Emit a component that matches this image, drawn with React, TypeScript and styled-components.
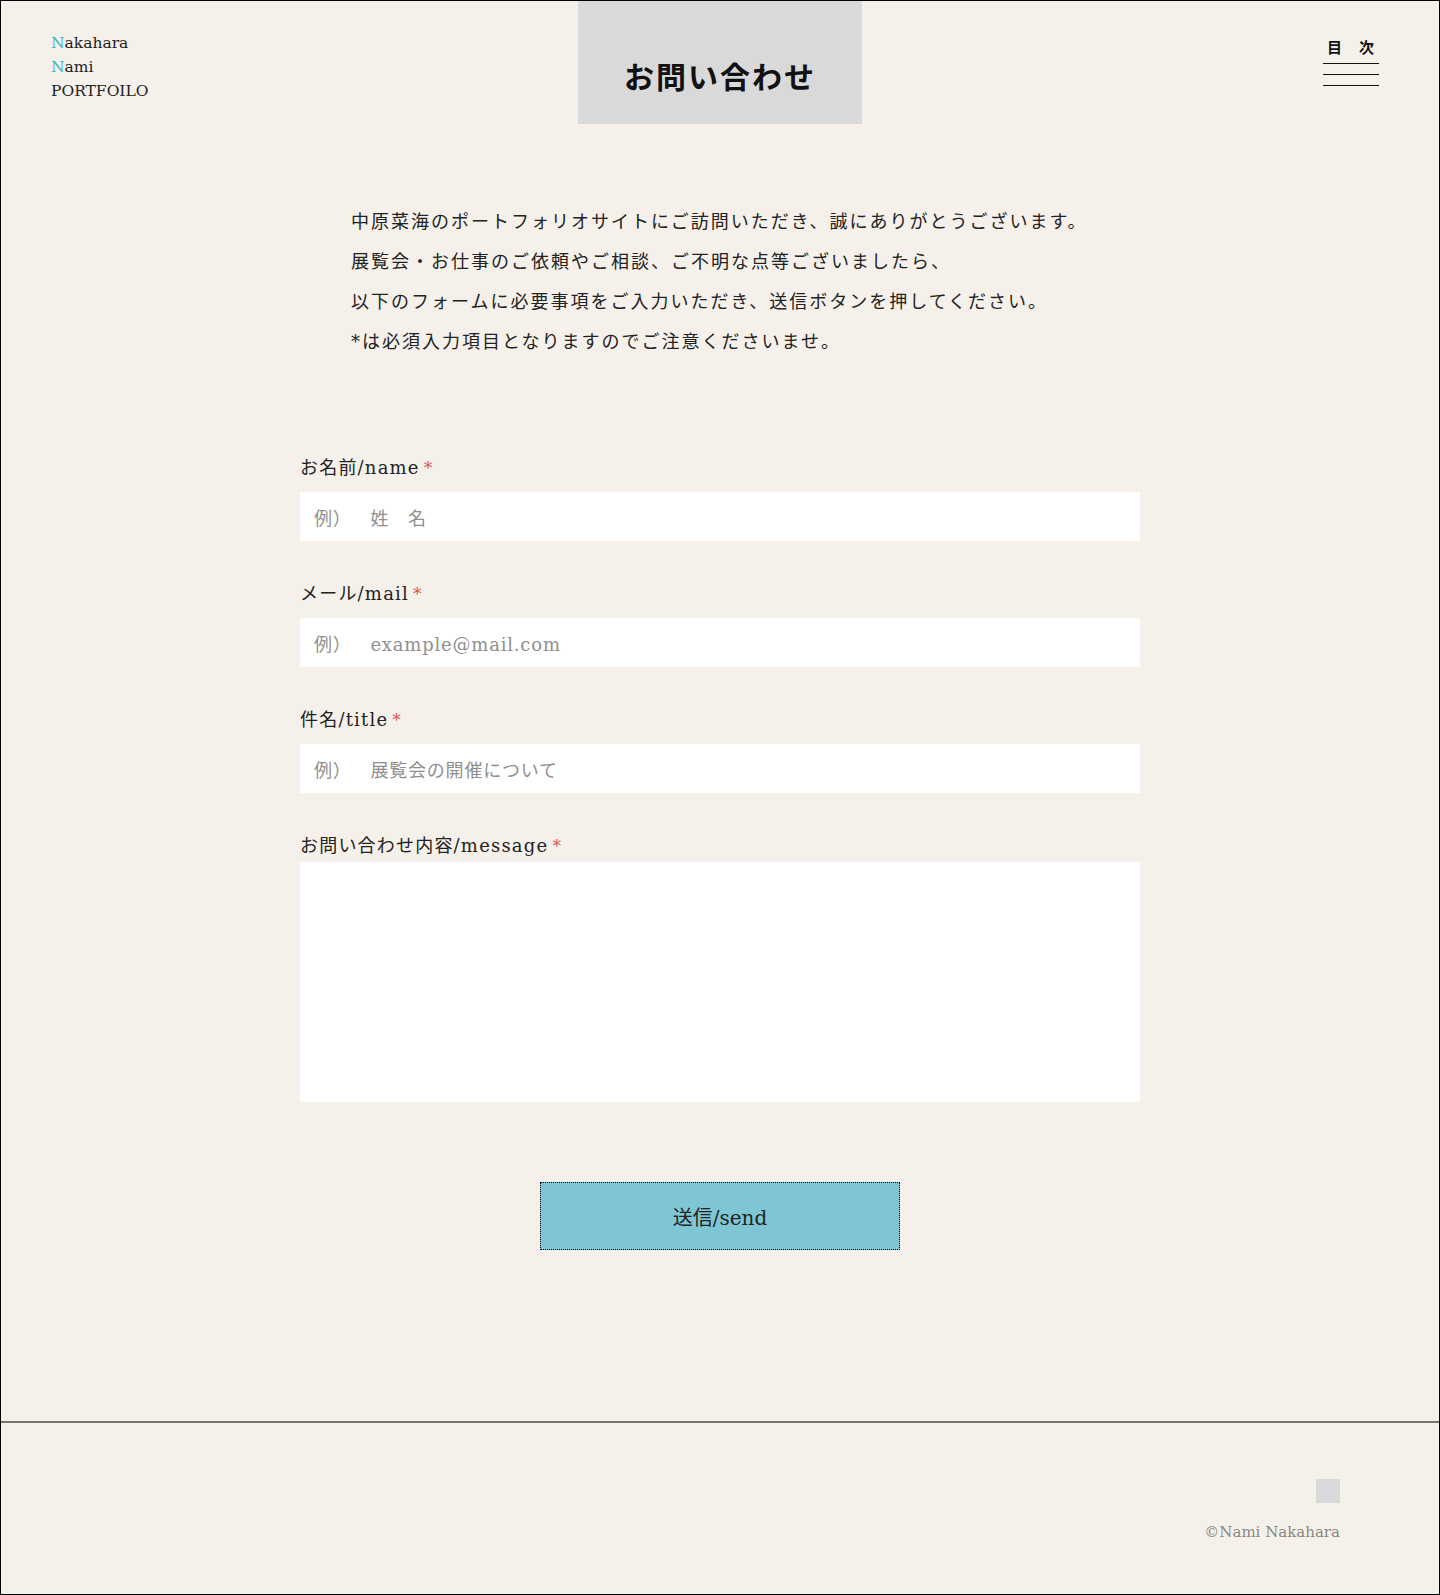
import React from "react";
import styled, { createGlobalStyle } from "styled-components";

const GlobalStyle = createGlobalStyle`
  html, body {
    margin: 0;
    padding: 0;
    background: #f5f1ea;
  }
  * {
    box-sizing: border-box;
  }
  body {
    text-spacing-trim: space-all;
  }
`;

const font = `"DejaVu Serif", "Noto Sans CJK JP", serif`;

const Page = styled.div`
  min-height: 1595px;
  border: 1px solid #000;
  background: #f5f1ea;
  font-family: ${font};
  color: #222;
  display: flex;
  flex-direction: column;
  text-spacing-trim: space-all;
`;

const Header = styled.header`
  display: grid;
  grid-template-columns: 1fr 284px 1fr;
  align-items: start;
  height: 123px;
`;

const Logo = styled.div`
  padding: 30px 0 0 50px;
  font-size: 15.5px;
  line-height: 24px;
  font-weight: 300;
  color: #222;
`;

const Initial = styled.span`
  color: #3cb3cb;
`;

const TitleBox = styled.div`
  height: 123px;
  background: #d9d9d9;
  display: flex;
  justify-content: center;
  padding-top: 54px;
`;

const Title = styled.h1`
  margin: 0;
  font-size: 30px;
  line-height: 45px;
  font-weight: 700;
  letter-spacing: 2px;
  color: #111;
`;

const MenuWrap = styled.div`
  justify-self: end;
  margin: 36px 60px 0 0;
  width: 56px;
  display: flex;
  flex-direction: column;
  align-items: center;
`;

const MenuLabel = styled.div`
  font-size: 15px;
  font-weight: 700;
  line-height: 22px;
  letter-spacing: 1px;
  margin-bottom: 4px;
  color: #111;
`;

const MenuLine = styled.span`
  display: block;
  width: 56px;
  height: 1px;
  background: #111;
  margin-bottom: 10px;
`;

const Main = styled.main`
  width: 840px;
  margin: 0 auto;
  padding-top: 78px;
  flex: 1;
`;

const Intro = styled.div`
  padding-left: 51px;
  font-size: 18px;
  line-height: 40px;
  letter-spacing: 2px;
  color: #222;
`;

const Form = styled.form`
  margin-top: 92px;
  display: flex;
  flex-direction: column;
`;

const Field = styled.div<{ $last?: boolean }>`
  display: flex;
  flex-direction: column;
  margin-bottom: ${(p) => (p.$last ? "0" : "39px")};
`;

const Label = styled.label<{ $tight?: boolean }>`
  font-size: 18px;
  line-height: 27px;
  letter-spacing: 1.2px;
  color: #222;
  margin-bottom: ${(p) => (p.$tight ? "3px" : "11px")};
`;

const Req = styled.span`
  color: #d9534f;
  font-size: 17px;
  line-height: 1;
  margin-left: 4px;
`;

const Input = styled.input`
  width: 100%;
  height: 49px;
  border: none;
  outline: none;
  background: #fff;
  padding: 4px 14px 0;
  font-family: ${font};
  font-size: 18px;
  letter-spacing: 0.8px;
  color: #222;
  text-spacing-trim: space-all;

  &::placeholder {
    color: #8f8f8f;
  }
`;

const TextArea = styled.textarea`
  width: 100%;
  height: 240px;
  border: none;
  outline: none;
  resize: none;
  background: #fff;
  padding: 12px 14px;
  font-family: ${font};
  font-size: 18px;
  display: block;
`;

const ButtonRow = styled.div`
  display: flex;
  justify-content: center;
  margin-top: 80px;
`;

const SendButton = styled.button`
  width: 360px;
  height: 68px;
  background: #7ec6d4;
  border: 1px dotted #000;
  font-family: ${font};
  font-size: 20px;
  color: #222;
  cursor: pointer;
`;

const Footer = styled.footer`
  margin-top: 170px;
  border-top: 2px solid #7a766f;
  height: 173px;
  padding: 56px 99px 0 0;
  display: flex;
  flex-direction: column;
  align-items: flex-end;
`;

const TopButton = styled.div`
  width: 24px;
  height: 24px;
  background: #d9d9d9;
`;

const Copy = styled.small`
  margin-top: 17px;
  font-size: 15px;
  line-height: 24px;
  color: #8a8780;
`;

export default function App() {
  return (
    <>
      <GlobalStyle />
      <Page>
        <Header>
          <Logo>
            <div>
              <Initial>N</Initial>akahara
            </div>
            <div>
              <Initial>N</Initial>ami
            </div>
            <div>PORTFOILO</div>
          </Logo>
          <TitleBox>
            <Title>お問い合わせ</Title>
          </TitleBox>
          <MenuWrap>
            <MenuLabel>目　次</MenuLabel>
            <MenuLine />
            <MenuLine />
            <MenuLine />
          </MenuWrap>
        </Header>

        <Main>
          <Intro>
            <div>中原菜海のポートフォリオサイトにご訪問いただき、誠にありがとうございます。</div>
            <div>展覧会・お仕事のご依頼やご相談、ご不明な点等ございましたら、</div>
            <div>以下のフォームに必要事項をご入力いただき、送信ボタンを押してください。</div>
            <div>*は必須入力項目となりますのでご注意くださいませ。</div>
          </Intro>

          <Form onSubmit={(e) => e.preventDefault()}>
            <Field>
              <Label>
                お名前/name<Req>*</Req>
              </Label>
              <Input placeholder="例）　姓　名" />
            </Field>
            <Field>
              <Label>
                メール/mail<Req>*</Req>
              </Label>
              <Input placeholder="例）　example@mail.com" />
            </Field>
            <Field>
              <Label>
                件名/title<Req>*</Req>
              </Label>
              <Input placeholder="例）　展覧会の開催について" />
            </Field>
            <Field $last>
              <Label $tight>
                お問い合わせ内容/message<Req>*</Req>
              </Label>
              <TextArea />
            </Field>
            <ButtonRow>
              <SendButton type="submit">送信/send</SendButton>
            </ButtonRow>
          </Form>
        </Main>

        <Footer>
          <TopButton />
          <Copy>©Nami Nakahara</Copy>
        </Footer>
      </Page>
    </>
  );
}
